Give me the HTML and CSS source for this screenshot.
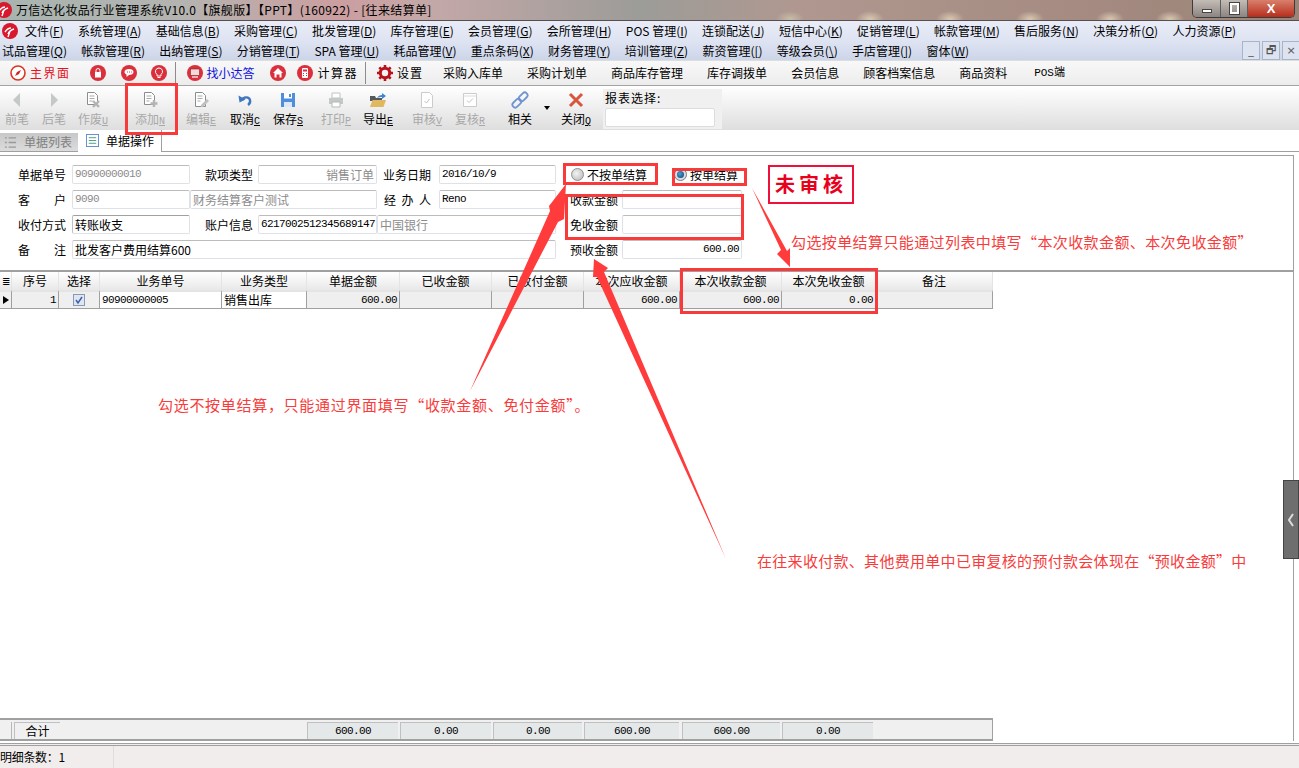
FILE: index.html
```html
<!DOCTYPE html>
<html lang="zh-CN">
<head>
  <title>万信达化妆品行业管理系统</title>
  <meta charset="utf-8">
  <link rel="stylesheet" href="styles.css">
</head>
<body>
<div class="app">
  <header class="titlebar">
    <svg class="logo logo-title" viewBox="0 0 16 16"><circle cx="8" cy="8" r="8" fill="#d8182c"/><path d="M3 9c2-3 4-4 6-4M6 11c1-3 3-4 6-5M8 8l-2 6" stroke="#fff" stroke-width="1.4" fill="none"/></svg>
    <span class="title-text">万信达化妆品行业管理系统V10.0【旗舰版】【PPT】(160922) - [往来结算单]</span>
    <div class="win-btns">
      <span class="win-btn win-min"><i></i></span>
      <span class="win-btn win-max"><i></i></span>
      <span class="win-btn win-close">X</span>
    </div>
  </header>

  <nav class="menubar">
    <div class="menu-row menu-row-first">
      <svg class="logo logo-menu" viewBox="0 0 16 16"><circle cx="8" cy="8" r="8" fill="#d8182c"/><path d="M3 9c2-3 4-4 6-4M6 11c1-3 3-4 6-5M8 8l-2 6" stroke="#fff" stroke-width="1.4" fill="none"/></svg>
      <a>文件(<u>F</u>)</a><a>系统管理(<u>A</u>)</a><a>基础信息(<u>B</u>)</a><a>采购管理(<u>C</u>)</a><a>批发管理(<u>D</u>)</a><a>库存管理(<u>E</u>)</a><a>会员管理(<u>G</u>)</a><a>会所管理(<u>H</u>)</a><a>POS 管理(<u>I</u>)</a><a>连锁配送(<u>J</u>)</a><a>短信中心(<u>K</u>)</a><a>促销管理(<u>L</u>)</a><a>帐款管理(<u>M</u>)</a><a>售后服务(<u>N</u>)</a><a>决策分析(<u>O</u>)</a><a>人力资源(<u>P</u>)</a>
    </div>
    <div class="menu-row menu-row-second">
      <a>试品管理(<u>Q</u>)</a><a>帐款管理(<u>R</u>)</a><a>出纳管理(<u>S</u>)</a><a>分销管理(<u>T</u>)</a><a>SPA 管理(<u>U</u>)</a><a>耗品管理(<u>V</u>)</a><a>重点条码(<u>X</u>)</a><a>财务管理(<u>Y</u>)</a><a>培训管理(<u>Z</u>)</a><a>薪资管理(<u>[</u>)</a><a>等级会员(<u>\</u>)</a><a>手店管理(<u>]</u>)</a><a>窗体(<u>W</u>)</a>
      <div class="mdi-btns">
        <span class="mdi-btn">_</span><span class="mdi-btn">&#x1F5D7;&#xFE0E;</span><span class="mdi-btn">×</span>
      </div>
    </div>
  </nav>

  <div class="quickbar">
    <span class="quick quick-home"><svg class="ico" viewBox="0 0 16 16"><circle cx="8" cy="8" r="7" fill="#fff" stroke="#d32" stroke-width="1.6"/><path d="M11 5L9 9 5 11l2-4z" fill="#c22"/></svg>主界面</span>
    <span class="quick quick-lock"><svg class="ico" viewBox="0 0 16 16"><circle cx="8" cy="8" r="8" fill="#d9303c"/><rect x="5" y="7" width="6" height="5.500" fill="#fff"/><path d="M6 7V5.500a2 2 0 0 1 4 0V7" stroke="#fff" fill="none"/></svg></span>
    <span class="quick quick-chat"><svg class="ico" viewBox="0 0 16 16"><circle cx="8" cy="8" r="8" fill="#d9303c"/><path d="M3.500 7c0-2 2-3 4.500-3s4.500 1 4.500 3-2 3-4.500 3l-2.500 2v-2.500C4.300 9 3.500 8.200 3.500 7z" fill="#fff"/><path d="M6 7h1M8 7h1M10 7h.8" stroke="#d9303c"/></svg></span>
    <span class="quick quick-bulb"><svg class="ico" viewBox="0 0 16 16"><circle cx="8" cy="8" r="8" fill="#d9303c"/><path d="M8 3a3.500 3.500 0 0 1 2 6.400V11H6V9.400A3.500 3.500 0 0 1 8 3z" fill="none" stroke="#fff"/><path d="M6.500 12.500h3" stroke="#fff"/></svg></span>
    <span class="quick-sep quick-sep-a"></span>
    <span class="quick quick-help"><svg class="ico" viewBox="0 0 16 16"><circle cx="8" cy="8" r="8" fill="#d9303c"/><rect x="3.500" y="4" width="9" height="6.500" fill="#f6d8d8" stroke="#8a2020" stroke-width=".6"/><path d="M5 12h6" stroke="#fff" stroke-width="1.200"/></svg>找小达答</span>
    <span class="quick quick-house"><svg class="ico" viewBox="0 0 16 16"><circle cx="8" cy="8" r="8" fill="#d9303c"/><path d="M8 3l5 5h-1.500v4.500h-2V9.500h-3v3h-2V8H3z" fill="#fff"/></svg></span>
    <span class="quick quick-calc"><svg class="ico" viewBox="0 0 16 16"><circle cx="8" cy="8" r="8" fill="#d9303c"/><rect x="5" y="3" width="6" height="10" rx="1" fill="#fff"/><rect x="6" y="4.500" width="4" height="2" fill="#d9303c"/><path d="M6 8.500h1M9 8.500h1M6 10.500h1M9 10.500h1" stroke="#d9303c"/></svg>计算器</span>
    <span class="quick-sep quick-sep-b"></span>
    <span class="quick quick-gear"><svg class="ico" viewBox="0 0 16 16"><circle cx="8" cy="8" r="4.700" fill="none" stroke="#b8121a" stroke-width="3"/><path d="M8 0v3M8 13v3M0 8h3M13 8h3M2.300 2.300l2.200 2.200M11.500 11.500l2.200 2.200M2.300 13.700l2.200-2.200M11.500 4.500l2.200-2.200" stroke="#b8121a" stroke-width="2.600"/></svg>设置</span>
    <span class="quick quick-link">采购入库单</span>
    <span class="quick quick-link">采购计划单</span>
    <span class="quick quick-link">商品库存管理</span>
    <span class="quick quick-link">库存调拨单</span>
    <span class="quick quick-link">会员信息</span>
    <span class="quick quick-link">顾客档案信息</span>
    <span class="quick quick-link">商品资料</span>
    <span class="quick quick-pos">POS端</span>
  </div>

  <div class="toolbar">
    <div class="tool off"><svg class="tool-ico" viewBox="0 0 18 18"><path d="M12 2v14L5 9z" fill="#c4c8c8"/></svg><span>前笔</span></div>
    <div class="tool off"><svg class="tool-ico" viewBox="0 0 18 18"><path d="M6 2v14l7-7z" fill="#c4c8c8"/></svg><span>后笔</span></div>
    <div class="tool off"><svg class="tool-ico" viewBox="0 0 18 18"><path d="M3.500 1.500h7l3 3v9h-10z" fill="#fff" stroke="#8a8e8e"/><path d="M5.500 5h5M5.500 7.500h5M5.500 10h3" stroke="#aaa"/><path d="M9 10l6 6M15 10l-6 6" stroke="#b4b4b4" stroke-width="2.400"/></svg><span>作废<u>U</u></span></div>
    <div class="tool off"><svg class="tool-ico" viewBox="0 0 18 18"><path d="M3.500 1.500h7l3 3v9h-10z" fill="#fff" stroke="#8a8e8e"/><path d="M5.500 5h5M5.500 7.500h5M5.500 10h3" stroke="#aaa"/><path d="M13 9v7M9.500 12.500h7" stroke="#b4b4b4" stroke-width="2.400"/></svg><span>添加<u>N</u></span></div>
    <div class="tool off"><svg class="tool-ico" viewBox="0 0 18 18"><path d="M3.500 1.500h7l3 3v11h-10z" fill="#fff" stroke="#8a8e8e"/><path d="M5.500 5h5M5.500 7.500h5M5.500 10h3" stroke="#aaa"/><path d="M9 14l6-6 2 2-6 6H9z" fill="#c0c0c0"/></svg><span>编辑<u>E</u></span></div>
    <div class="tool"><svg class="tool-ico" viewBox="0 0 18 18"><path d="M6 9c1-3 7-4 8 0 .5 2-.5 4-2 5" fill="none" stroke="#3f76c0" stroke-width="2.400"/><path d="M2.500 4.500l1 7 6-3z" fill="#3f76c0"/></svg><span>取消<u>C</u></span></div>
    <div class="tool"><svg class="tool-ico" viewBox="0 0 18 18"><path d="M2 2h14v14H2z" fill="#4f8ddd"/><path d="M5 2h8v5.500H5z" fill="#fff"/><path d="M10 3h2v3h-2z" fill="#4f8ddd"/><path d="M5 11h8v5H5z" fill="#dce8f8"/></svg><span>保存<u>S</u></span></div>
    <div class="tool off"><svg class="tool-ico" viewBox="0 0 18 18"><path d="M5 2h8v5H5z" fill="#fff" stroke="#c0c4c4"/><path d="M2 7h14v6H2z" fill="#c4c8c8"/><path d="M5 11h8v5H5z" fill="#fff" stroke="#b4b8b8"/></svg><span>打印<u>P</u></span></div>
    <div class="tool"><svg class="tool-ico" viewBox="0 0 18 18"><path d="M1 5h5l1 2h6v3H1z" fill="#55585c"/><path d="M1 16l2.500-7H17l-2.500 7z" fill="#e0b862"/><path d="M8 7c1-2 3-3 5-3V2l4 3-4 3V6c-2 0-3 0-5 1z" fill="#3f86d0"/></svg><span>导出<u>E</u></span></div>
    <div class="tool off"><svg class="tool-ico" viewBox="0 0 18 18"><path d="M3.500 1.500h8l3 3v12h-11z" fill="#fff" stroke="#c8cccc"/><path d="M6.500 10l2 2 3-4" fill="none" stroke="#c0c4c4"/></svg><span>审核<u>V</u></span></div>
    <div class="tool off"><svg class="tool-ico" viewBox="0 0 18 18"><path d="M2.500 2.500h13v13h-13z" fill="#fff" stroke="#c8cccc"/><path d="M2.500 5h13" stroke="#d8dcdc"/><path d="M6 9.500l2 2 4-4" fill="none" stroke="#c0c4c4"/></svg><span>复核<u>R</u></span></div>
    <div class="tool"><svg class="tool-ico" viewBox="0 0 18 18"><g transform="rotate(-45 9 9)" fill="none" stroke="#6f94d2" stroke-width="1.800"><rect x="-.5" y="6.200" width="10" height="5.600" rx="2.800"/><rect x="8.500" y="6.200" width="10" height="5.600" rx="2.800"/></g></svg><span>相关</span></div>
    <span class="tool-drop"></span>
    <div class="tool"><svg class="tool-ico" viewBox="0 0 18 18"><path d="M3 3l12 12M15 3L3 15" stroke="#d8553f" stroke-width="3"/></svg><span>关闭<u>Q</u></span></div>
    <div class="report">
      <span class="report-label">报表选择:</span>
      <div class="report-input"></div>
    </div>
  </div>

  <div class="tabs">
    <div class="tab"><svg class="tab-ico" viewBox="0 0 14 14"><path d="M1 2h2M5 2h8M1 7h2M5 7h8M1 12h2M5 12h8" stroke="#999" stroke-width="1.400"/></svg>单据列表</div>
    <div class="tab tab-active"><svg class="tab-ico" viewBox="0 0 14 14"><rect x=".5" y=".5" width="13" height="13" fill="#fff" stroke="#5a8ccc"/><path d="M3 4h8M3 7h8M3 10h8" stroke="#4a9a7a"/></svg>单据操作</div>
  </div>

  <main class="content">
    <section class="form">
      <label class="lbl">单据单号</label>
      <div class="field dim mono">90900000010</div>
      <label class="lbl lbl-r">款项类型</label>
      <div class="field dim right">销售订单</div>
      <label class="lbl lbl-r2">业务日期</label>
      <div class="field mono">2016/10/9</div>
      <div class="radios">
        <span class="radio"><i class="radio-dot"></i>不按单结算</span>
        <span class="radio radio-on"><i class="radio-dot"></i>按单结算</span>
      </div>

      <label class="lbl lbl-spread"><span>客</span><span>户</span></label>
      <div class="field dim mono">9090</div>
      <div class="field dim span-2">财务结算客户测试</div>
      <label class="lbl lbl-r2 lbl-spread3"><span>经</span><span>办</span><span>人</span></label>
      <div class="field mono">Reno</div>
      <label class="lbl lbl-r3">收款金额</label>
      <div class="field"></div>

      <label class="lbl">收付方式</label>
      <div class="field field-dark">转账收支</div>
      <label class="lbl lbl-r">账户信息</label>
      <div class="field mono">6217002512345689147</div>
      <div class="field dim span-2">中国银行</div>
      <label class="lbl lbl-r3">免收金额</label>
      <div class="field"></div>

      <label class="lbl lbl-spread"><span>备</span><span>注</span></label>
      <div class="field span-5">批发客户费用结算600</div>
      <label class="lbl lbl-r3">预收金额</label>
      <div class="field mono right">600.00</div>
    </section>

    <section class="grid-area">
      <div class="grid-table">
        <div class="cell head head-mark">≣</div>
        <div class="cell head">序号</div>
        <div class="cell head">选择</div>
        <div class="cell head">业务单号</div>
        <div class="cell head">业务类型</div>
        <div class="cell head">单据金额</div>
        <div class="cell head">已收金额</div>
        <div class="cell head">已收付金额</div>
        <div class="cell head">本次应收金额</div>
        <div class="cell head">本次收款金额</div>
        <div class="cell head">本次免收金额</div>
        <div class="cell head">备注</div>

        <div class="cell row-mark"></div>
        <div class="cell num">1</div>
        <div class="cell check-cell"><svg class="check" viewBox="0 0 12 12"><rect x=".5" y=".5" width="11" height="11" fill="#dfe6f2" stroke="#8a9ab4"/><path d="M3 6l2 3 4-6" fill="none" stroke="#3a62a8" stroke-width="1.500"/></svg></div>
        <div class="cell blank mono">90900000005</div>
        <div class="cell blank">销售出库</div>
        <div class="cell num">600.00</div>
        <div class="cell num"></div>
        <div class="cell num"></div>
        <div class="cell num">600.00</div>
        <div class="cell num">600.00</div>
        <div class="cell num">0.00</div>
        <div class="cell num"></div>
      </div>
    </section>

    <section class="totals">
      <div class="total-gap"></div>
      <div class="total total-label">合计</div>
      <div class="total-gap total-gap-wide"></div>
      <div class="total">600.00</div>
      <div class="total">0.00</div>
      <div class="total">0.00</div>
      <div class="total">600.00</div>
      <div class="total">600.00</div>
      <div class="total">0.00</div>
    </section>
  </main>

  <footer class="statusbar"><span class="status-cell">明细条数：1</span></footer>
</div>

<div class="side-handle"><svg viewBox="0 0 8 14"><path d="M6 1L2 7l4 6" fill="none" stroke="#ddd" stroke-width="2"/></svg></div>

<!-- red notes drawn on top of the screenshot -->
<svg class="arrows" viewBox="0 0 1299 768">
  <polygon points="470,391 558,222 564,219 566,184 549,206 550,211"/>
  <polygon points="594,259 608,268 604,272 726,559 597,277 593,277"/>
  <polygon points="752,188 787,251 790,248 790,267 777,254 781,250"/>
</svg>
<div class="mark mark-add"></div>
<div class="mark mark-radio1"></div>
<div class="mark mark-radio2"></div>
<div class="mark mark-fields"></div>
<div class="mark mark-cols"></div>
<div class="stamp">未审核</div>
<p class="note note-a">勾选按单结算只能通过列表中填写“本次收款金额、本次免收金额”</p>
<p class="note note-b">勾选不按单结算，只能通过界面填写“收款金额、免付金额”。</p>
<p class="note note-c">在往来收付款、其他费用单中已审复核的预付款会体现在“预收金额”中</p>
</body>
</html>
```

FILE: styles.css
```css
* {
  box-sizing: border-box;
  margin: 0;
}

body {
  position: relative;
  width: 1299px;
  height: 768px;
  overflow: hidden;
  background-color: #FFFFFF;
  color: #000000;
  font-family: "Noto Sans CJK SC", sans-serif;
  font-size: 12px;
  line-height: 1;
}

u {
  text-decoration: underline;
}

.app {
  display: flex;
  flex-direction: column;
  height: 768px;
}

/* title bar */
.titlebar {
  display: flex;
  align-items: center;
  height: 21px;
  flex: none;
  border-bottom: 1px solid #54504c;
  background:
    radial-gradient(ellipse 14px 8px at 790px 19px, #c8bda8, transparent),
    radial-gradient(ellipse 14px 8px at 870px 19px, #d8c8b0, transparent),
    radial-gradient(ellipse 14px 8px at 950px 19px, #d8c8b0, transparent),
    radial-gradient(ellipse 14px 8px at 1030px 19px, #d8c8b0, transparent),
    radial-gradient(ellipse 14px 8px at 1110px 19px, #d8c8b0, transparent),
    radial-gradient(ellipse 14px 8px at 1170px 19px, #d8c8b0, transparent),
    linear-gradient(90deg, #a8b4b0 0, #b4b4b0 180px, #cc9ea0 340px, #c4a8a8 430px, #9c9c98 640px, #b09890 800px, #a48a80 1100px, #9a8478 1299px);
}

.logo {
  flex: none;
}

.logo-title {
  width: 16px;
  height: 16px;
  margin-left: -4px;
}

.title-text {
  margin-left: 4px;
  letter-spacing: .35px;
  white-space: nowrap;
}

.win-btns {
  display: flex;
  align-self: flex-start;
  height: 18px;
  margin-left: auto;
  margin-right: 4px;
  border: 1px solid #3c3c3c;
  border-top: 0;
  border-radius: 0 0 5px 5px;
  overflow: hidden;
}

.win-btn {
  display: flex;
  align-items: center;
  justify-content: center;
  background: linear-gradient(#c4bdb6, #8c8480);
}

.win-min {
  width: 28px;
  border-right: 1px solid #5c5c5c;
}

.win-min i {
  width: 10px;
  height: 4px;
  margin-top: 4px;
  border: 1px solid #444444;
  background-color: #FFFFFF;
}

.win-max {
  width: 27px;
  border-right: 1px solid #5c5c5c;
}

.win-max i {
  width: 9px;
  height: 11px;
  border: 2px solid #FFFFFF;
  outline: 1px solid #444444;
}

.win-close {
  width: 46px;
  background: linear-gradient(#d8806c, #b82c1c);
  color: #FFFFFF;
  font-family: "Liberation Sans", sans-serif;
  font-size: 13px;
  font-weight: 700;
}

/* menus */
.menubar {
  flex: none;
  height: 39px;
  background: linear-gradient(#e9ecf8, #dfe4f2 50%, #ccd5e9);
}

.menu-row {
  display: flex;
  align-items: center;
  height: 20px;
  padding-left: 2px;
  white-space: nowrap;
}

.menu-row-second {
  height: 19px;
}

.menu-row a {
  margin-right: 14.250px;
}

.menu-row-first a:first-of-type {
  margin-left: 7px;
}

.logo-menu {
  width: 16px;
  height: 16px;
}

.mdi-btns {
  display: flex;
  gap: 2px;
  margin-left: auto;
  margin-right: -1px;
}

.mdi-btn {
  display: flex;
  align-items: center;
  justify-content: center;
  width: 18px;
  height: 19px;
  border: 1px solid #a8b4c8;
  background-color: #dde3f0;
  color: #555555;
  font-family: "DejaVu Sans", sans-serif;
  font-size: 11px;
}

/* quick links */
.quickbar {
  display: flex;
  align-items: center;
  flex: none;
  height: 26px;
  padding-left: 10px;
  border-top: 1px solid #dddddd;
  border-bottom: 1px solid #a4a4a4;
  background: linear-gradient(#f8f8f8, #ececec);
  white-space: nowrap;
}

.quick {
  display: flex;
  align-items: center;
  gap: 4px;
}

.ico {
  width: 16px;
  height: 16px;
  flex: none;
}

.quick-home {
  color: #e8101c;
  letter-spacing: 1.500px;
}

.quick-lock { margin-left: 19px; }
.quick-chat { margin-left: 15px; }
.quick-bulb { margin-left: 14px; }

.quick-sep {
  width: 1px;
  height: 22px;
  background-color: #8c8c8c;
}

.quick-sep-a { margin-left: 8px; }
.quick-sep-b { margin-left: 7px; }

.quick-help {
  margin-left: 11px;
  color: #1010e0;
}

.quick-house { margin-left: 15px; }
.quick-calc { margin-left: 11px; gap: 5px; letter-spacing: 1.500px; }
.quick-gear { margin-left: 11px; letter-spacing: 1px; }

.quick-link {
  margin-left: 24px;
}

.quick-gear + .quick-link {
  margin-left: 20px;
}

.quick-pos {
  margin-left: 27px;
  font-family: "Liberation Mono", "Noto Sans CJK SC", monospace;
  font-size: 11px;
}

/* toolbar */
.toolbar {
  position: relative;
  display: flex;
  flex: none;
  height: 44px;
  background: linear-gradient(#FFFFFF, #dedede);
}

.tool {
  display: flex;
  flex-direction: column;
  align-items: center;
  flex: none;
  width: 36px;
  padding-top: 5px;
  white-space: nowrap;
}

.tool-ico {
  width: 18px;
  height: 18px;
  margin-bottom: 4px;
}

.tool.off {
  color: #a8a8a8;
}

.tool u {
  font-family: "Liberation Mono", monospace;
  font-size: 10px;
}

.tool:nth-child(1) { margin-left: -1px; }
.tool:nth-child(2) { margin-left: 1px; }
.tool:nth-child(3) { margin-left: 3px; }
.tool:nth-child(4) { margin-left: 21px; }
.tool:nth-child(5) { margin-left: 15px; }
.tool:nth-child(6) { margin-left: 8px; }
.tool:nth-child(7) { margin-left: 7px; }
.tool:nth-child(8) { margin-left: 12px; }
.tool:nth-child(9) { margin-left: 6px; }
.tool:nth-child(10) { margin-left: 13px; }
.tool:nth-child(11) { margin-left: 7px; }
.tool:nth-child(12) { margin-left: 14px; }
.tool:nth-child(14) { margin-left: 14px; }

.tool-drop {
  width: 0;
  height: 0;
  margin: 20px 0 0 6px;
  border: 3px solid transparent;
  border-top: 4px solid #000000;
  margin-right: -6px;
  flex: none;
}

.report {
  width: 119px;
  height: 40px;
  margin-top: 3px;
  margin-left: 9px;
  padding: 3px 0 0 2px;
  background-color: #f0f0f0;
}

.report-label {
  display: block;
  letter-spacing: 1px;
}

.report-input {
  width: 110px;
  height: 19px;
  margin-top: 4px;
  border: 1px solid #dddddd;
  border-radius: 2px;
  background-color: #FFFFFF;
}

/* tabs */
.tabs {
  display: flex;
  align-items: flex-end;
  flex: none;
  height: 22px;
  border-bottom: 1px solid #a0a0a0;
}

.tab {
  display: flex;
  align-items: center;
  gap: 7px;
  width: 78px;
  height: 18px;
  padding-left: 4px;
  background: linear-gradient(#c8c8c8, #dcdcdc);
  color: #808080;
  white-space: nowrap;
}

.tab-active {
  width: 84px;
  height: 23px;
  margin-bottom: -1px;
  padding-left: 8px;
  border-right: 1px solid #a0a0a0;
  background: #FFFFFF;
  color: #000000;
}

.tab-ico {
  width: 13px;
  height: 13px;
  flex: none;
}

/* main area */
.content {
  position: relative;
  display: flex;
  flex-direction: column;
  flex: 1;
  margin-top: 3px;
  margin-right: 5px;
  border-top: 1px solid #a0a0a0;
  border-right: 1px solid #a0a0a0;
  outline: 0;
}

.form {
  display: grid;
  grid-template-columns: 72px 118px 68px 119px 62px 117px 66px 120px;
  grid-auto-rows: 19px;
  row-gap: 6px;
  flex: none;
  height: 116px;
  padding-top: 9px;
  border-bottom: 2px solid #a0a0a0;
}

.lbl {
  display: flex;
  align-items: center;
  justify-content: flex-end;
  padding-right: 6px;
  white-space: nowrap;
}

.lbl-r {
  padding-right: 5px;
}

.lbl-r2 {
  padding-right: 8px;
}

.lbl-r3 {
  padding-right: 4px;
}

.lbl-spread {
  justify-content: space-between;
  padding-left: 18px;
}

.lbl-spread3 {
  justify-content: space-between;
  padding-left: 7px;
}

.field {
  display: flex;
  align-items: center;
  padding: 0 2px;
  overflow: hidden;
  border: 1px solid #dde1e8;
  border-top-color: #bcbcbc;
  border-radius: 2px;
  background-color: #FFFFFF;
  white-space: nowrap;
}

.field-dark {
  border-top-color: #a0a0a0;
  border-left-color: #c0c0c0;
}

.dim {
  color: #8c8c8c;
}

.right {
  justify-content: flex-end;
}

.mono {
  font-family: "Liberation Mono", monospace;
  font-size: 11px;
  letter-spacing: -0.600px;
}

.span-2 {
  grid-column: span 2;
}

.span-5 {
  grid-column: span 5;
}

.radios {
  display: flex;
  grid-column: span 2;
  align-items: center;
  padding-left: 15px;
  white-space: nowrap;
}

.radio {
  display: flex;
  align-items: center;
  flex: none;
  gap: 3px;
  width: 103px;
}

.radio-on {
  width: 70px;
}

.radio-dot {
  width: 13px;
  height: 13px;
  flex: none;
  border: 1px solid #909090;
  border-radius: 50%;
  background: radial-gradient(circle at 40% 40%, #f4f4f4, #b4b4b4);
}

.radio-on .radio-dot {
  border: 3px solid #d8dce0;
  outline: 1px solid #808080;
  outline-offset: -1px;
  background: radial-gradient(circle at 40% 40%, #4aa0d8, #0c3c70);
}

/* data grid */
.grid-area {
  flex: 1;
}

.grid-table {
  display: grid;
  grid-template-columns: 12px 47px 41px 122px 85px 93px 92px 92px 96px 102px 94px 117px;
  grid-template-rows: 18px 19px;
  width: 993px;
}

.cell {
  display: flex;
  align-items: center;
  justify-content: center;
  overflow: hidden;
  white-space: nowrap;
}

.head {
  border-right: 1px solid #e4e4e4;
  background: linear-gradient(#FFFFFF, #e8e8e8);
}

.head-mark {
  font-size: 10px;
}

.row-mark,
.num,
.check-cell,
.blank {
  border-top: 2px solid #e4e4e4;
  border-right: 1px solid #a0a0a0;
  border-bottom: 1px solid #a0a0a0;
}

.row-mark {
  background-color: #efefef;
}

.row-mark::before {
  content: "";
  border: 4px solid transparent;
  border-left: 6px solid #000000;
  margin-left: 5px;
}

.num {
  justify-content: flex-end;
  padding-right: 2px;
  background-color: #efefef;
  font-family: "Liberation Mono", monospace;
  font-size: 11px;
  letter-spacing: -0.600px;
}

.check-cell {
  background-color: #efefef;
}

.check {
  width: 12px;
  height: 12px;
}

.blank {
  justify-content: flex-start;
  padding-left: 2px;
  background-color: #FFFFFF;
}

.totals {
  display: flex;
  flex: none;
  width: 993px;
  height: 23px;
  padding-top: 2px;
  border-top: 2px solid #a0a0a0;
  border-right: 1px solid #a0a0a0;
  border-bottom: 2px solid #a0a0a0;
  background-color: #f0f0f0;
  gap: 2px;
}

.total-gap {
  width: 12px;
  border-right: 1px solid #b8b8b8;
}

.total-gap-wide {
  width: 243px;
  border: 0;
}

.total {
  display: flex;
  align-items: center;
  justify-content: center;
  width: 91px;
  border-top: 1px solid #c0c0c0;
  border-left: 1px solid #c0c0c0;
  background-color: #e4e8e8;
  font-family: "Liberation Mono", monospace;
  font-size: 11px;
  letter-spacing: -0.600px;
}

.total-label {
  width: 46px;
  background-color: #f0f0f0;
  font-family: "Noto Sans CJK SC", sans-serif;
  font-size: 12px;
  letter-spacing: 0;
}

.total:nth-child(6) { width: 89px; }
.total:nth-child(7) { width: 95px; }
.total:nth-child(8) { width: 98px; margin-left: 1px; }

.statusbar {
  flex: none;
  height: 25px;
  margin-top: 2px;
  border-top: 3px double #a0a0a0;
  background-color: #f0edec;
}

.status-cell {
  display: flex;
  align-items: center;
  width: 114px;
  height: 100%;
  border-right: 1px solid #e0dcdc;
  letter-spacing: -.3px;
  white-space: nowrap;
}

/* handle on the right edge */
.side-handle {
  position: absolute;
  top: 480px;
  left: 1283px;
  display: flex;
  align-items: center;
  justify-content: center;
  width: 16px;
  height: 79px;
  border: 1px solid #444444;
  background-color: #6e6e6e;
}

.side-handle svg {
  width: 8px;
  height: 14px;
}

/* annotations over the screenshot */
.arrows {
  position: absolute;
  top: 0;
  left: 0;
  width: 1299px;
  height: 768px;
  fill: #ff3b3b;
  pointer-events: none;
}

.mark {
  position: absolute;
  border: 3px solid #f93a3a;
}

.mark-add { top: 83px; left: 125px; width: 53px; height: 52px; }
.mark-radio1 { top: 163px; left: 563px; width: 95px; height: 22px; }
.mark-radio2 { top: 168px; left: 672px; width: 75px; height: 18px; }
.mark-fields { top: 194px; left: 565px; width: 179px; height: 46px; }
.mark-cols { top: 268px; left: 680px; width: 198px; height: 46px; }

.stamp {
  position: absolute;
  top: 165px;
  left: 768px;
  display: flex;
  align-items: center;
  justify-content: center;
  width: 86px;
  height: 39px;
  border: 2px solid #f0103c;
  color: #e8001c;
  font-family: "Liberation Serif", "Noto Sans CJK SC", serif;
  font-size: 20px;
  font-weight: 700;
  letter-spacing: 4px;
}

.note {
  position: absolute;
  color: #f83c3c;
  font-size: 15px;
  line-height: 18px;
  white-space: nowrap;
}

.note-a { top: 233px; left: 791px; letter-spacing: .4px; }
.note-b { top: 396px; left: 158px; letter-spacing: .7px; }
.note-c { top: 552px; left: 757px; letter-spacing: .3px; }
```
